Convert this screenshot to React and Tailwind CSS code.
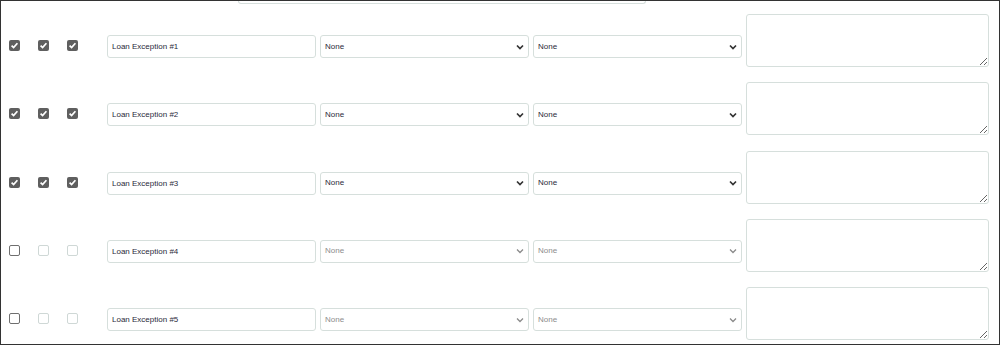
import React from 'react';

const rows = [
  { name: 'Loan Exception #1', checked: true },
  { name: 'Loan Exception #2', checked: true },
  { name: 'Loan Exception #3', checked: true },
  { name: 'Loan Exception #4', checked: false },
  { name: 'Loan Exception #5', checked: false },
];

function Box({ checked, disabled }) {
  if (checked) {
    return (
      <span className="flex w-[11px] h-[11px] items-center justify-center rounded-[2px] bg-[#5f5f5f]">
        <svg width="9" height="9" viewBox="0 0 9 9">
          <path d="M1.6 4.6 L3.6 6.6 L7.4 2.2" fill="none" stroke="#fff" strokeWidth="1.7" />
        </svg>
      </span>
    );
  }
  return (
    <span
      className={`block w-[11px] h-[11px] rounded-[2px] border bg-white ${
        disabled ? 'border-[#cfd8d6]' : 'border-[#6f6f6f]'
      }`}
    />
  );
}

function FakeSelect({ disabled }) {
  return (
    <div className="flex w-[209px] h-[23px] items-center justify-between rounded-[3px] border border-[#d6dfdc] bg-white pl-[4px] pr-[4px]">
      <span className={disabled ? 'text-[#8c8c8c]' : 'text-[#2a2a3a]'}>None</span>
      <svg width="8" height="6" viewBox="0 0 8 6">
        <path
          d="M1 1.5 L4 4.5 L7 1.5"
          fill="none"
          stroke={disabled ? '#8a8a8a' : '#333'}
          strokeWidth={disabled ? '1.3' : '1.7'}
        />
      </svg>
    </div>
  );
}

export default function App() {
  return (
    <div
      className="w-[1000px] h-[345px] overflow-hidden border border-[#333] bg-white text-[8px]"
      style={{ fontFamily: '"Liberation Sans", Arial, sans-serif' }}
    >
      {/* bottom edge of the panel above */}
      <div className="ml-[237px] w-[408px] h-[3px] rounded-b-[3px] border-x border-b border-[#d6dfdc]" />

      <div className="mt-[10px]">
        {rows.map((r, i) => (
          <div key={i} className="flex h-[68.25px] items-start">
            <div className="flex mt-[26px] ml-[8px]">
              <div className="w-[29px]">
                <Box checked={r.checked} />
              </div>
              <div className="w-[29px]">
                <Box checked={r.checked} disabled={!r.checked} />
              </div>
              <div className="w-[29px]">
                <Box checked={r.checked} disabled={!r.checked} />
              </div>
            </div>
            <div className="flex gap-[4px] mt-[21px] ml-[11px]">
              <input
                readOnly
                defaultValue={r.name}
                className="w-[209px] h-[23px] rounded-[3px] border border-[#d6dfdc] bg-white px-[4px] text-[8px] text-[#2a2a3a] outline-none"
                style={{ fontFamily: '"Liberation Sans", Arial, sans-serif' }}
              />
              <FakeSelect disabled={!r.checked} />
              <FakeSelect disabled={!r.checked} />
            </div>
            <textarea
              readOnly
              className="ml-[4px] w-[243px] h-[53px] rounded-[3px] border border-[#d6dfdc] bg-white"
            />
          </div>
        ))}
      </div>
    </div>
  );
}
